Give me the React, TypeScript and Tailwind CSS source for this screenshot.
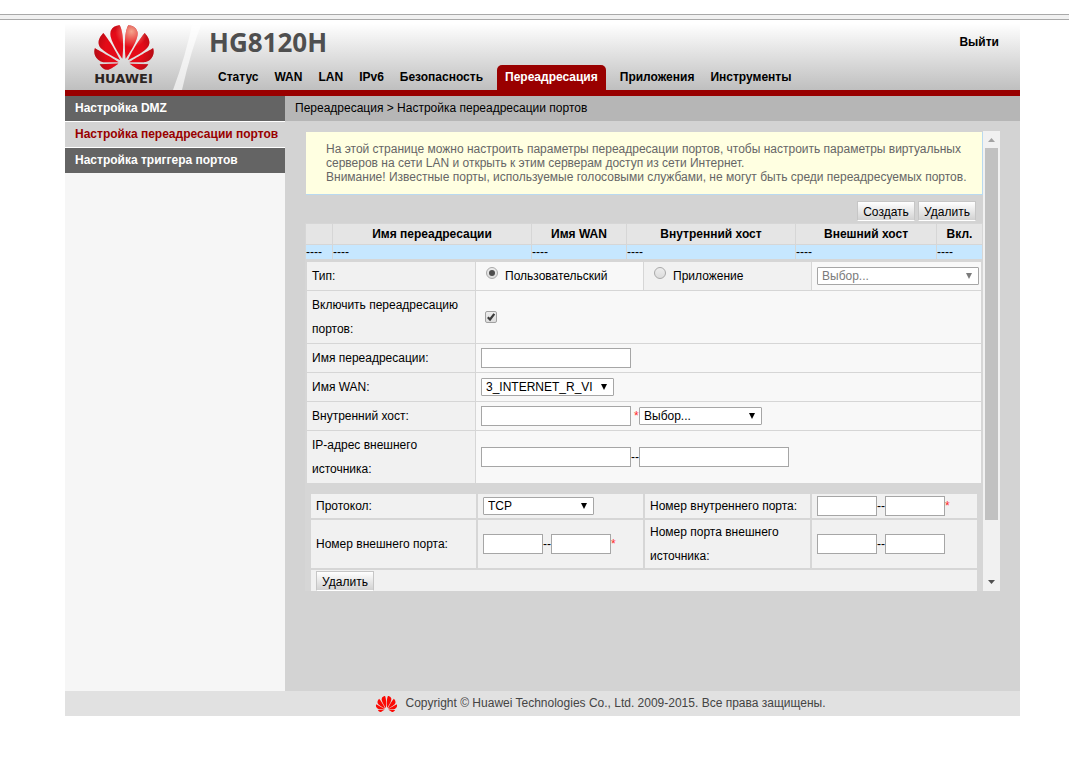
import { useId, useState } from "react";
import type { ReactNode } from "react";

const PETALS =
  "M3.67 6.14S1.82 7.91 1.72 9.78v.35c.08 1.51 1.22 2.4 1.22 2.4 1.83 1.79 6.26 4.04 7.3 4.55 0 0 .06.03.1-.01l.02-.04v-.04C7.52 10.8 3.67 6.14 3.67 6.14zM9.65 18.6c-.02-.08-.1-.08-.1-.08l-7.38.26c.8 1.43 2.15 2.53 3.56 2.2.96-.25 3.16-1.78 3.88-2.3.06-.05.04-.09.04-.09zm.08-.78C6.49 15.63.21 12.28.21 12.28c-.15.46-.2.9-.21 1.3v.07c0 1.07.4 1.82.4 1.82.8 1.69 2.34 2.2 2.34 2.2.7.3 1.4.31 1.4.31.12.02 4.4 0 5.54 0 .05 0 .08-.05.08-.05v-.06c0-.03-.03-.05-.03-.05zM9.06 3.19a3.42 3.42 0 0 0-2.57 3.15v.41c.03.6.16 1.05.16 1.05.66 2.9 3.86 7.65 4.55 8.65.05.05.1.03.1.03a.1.1 0 0 0 .06-.1c1.06-10.6-1.11-13.42-1.11-13.42-.32.02-1.19.23-1.19.23zm8.299 2.27s-.49-1.8-2.44-2.28c0 0-.57-.14-1.17-.22 0 0-2.18 2.81-1.12 13.43.01.07.06.08.06.08.07.03.1-.03.1-.03.72-1.03 3.9-5.76 4.55-8.64 0 0 .36-1.4.02-2.34zm-2.92 13.07s-.07 0-.09.05c0 0-.01.07.03.1.7.51 2.85 2 3.88 2.3 0 0 .16.05.43.06h.14c.69-.02 1.9-.37 3-2.26l-7.4-.25zm7.83-8.41c.14-2.06-1.94-3.97-1.94-3.98 0 0-3.85 4.66-6.67 10.8 0 0-.03.08.02.13l.04.01h.06c1.06-.53 5.46-2.77 7.28-4.54 0 0 1.15-.93 1.21-2.42zm1.52 2.14s-6.28 3.37-9.52 5.55c0 0-.05.04-.03.11 0 0 .03.06.07.06 1.16 0 5.56 0 5.67-.02 0 0 .57-.02 1.27-.29 0 0 1.56-.5 2.37-2.27 0 0 .73-1.45.17-3.14z";

function Petals({ shaded = false, className }: { shaded?: boolean; className: string }) {
  const id = useId();
  return (
    <svg viewBox="0 2.9 24 18.2" className={className} aria-hidden="true">
      <defs>
        <radialGradient id={`${id}-light`} gradientUnits="userSpaceOnUse" cx="15" cy="5.5" r="6.5">
          <stop offset="0" stopColor="#f4a58e" />
          <stop offset="1" stopColor="#f4a58e" stopOpacity="0" />
        </radialGradient>
        <radialGradient id={`${id}-dark`} gradientUnits="userSpaceOnUse" cx="12" cy="13" r="14">
          <stop offset="0.55" stopColor="#8e0d12" stopOpacity="0" />
          <stop offset="1" stopColor="#8e0d12" stopOpacity="0.8" />
        </radialGradient>
      </defs>
      <path d={PETALS} fill={shaded ? "#e40a18" : "#fb0a05"} />
      {shaded && <path d={PETALS} fill={`url(#${id}-dark)`} />}
      {shaded && <path d={PETALS} fill={`url(#${id}-light)`} />}
    </svg>
  );
}

const NAV = ["Статус", "WAN", "LAN", "IPv6", "Безопасность", "Переадресация", "Приложения", "Инструменты"];
const MENU = ["Настройка DMZ", "Настройка переадресации портов", "Настройка триггера портов"];
const COLUMNS = ["", "Имя переадресации", "Имя WAN", "Внутренний хост", "Внешний хост", "Вкл."];

function Header() {
  return (
    <header className="flex h-[76px] border-b-[6px] border-[#990000] bg-linear-to-b from-white from-5% to-[#bfbfbf]">
      <div className="flex w-[108px] flex-col items-center pt-[5px] pl-[9px]">
        <Petals shaded className="h-[45px] w-[60px] shrink-0" />
        <span className="mt-[2px] font-['DejaVu_Sans',sans-serif] text-[13px] leading-[14px] font-bold text-[#2b2422]">
          HUAWEI
        </span>
      </div>
      <svg viewBox="0 0 30 70" className="h-[70px] w-[30px] shrink-0" aria-hidden="true">
        <path d="M20 0H30Q18 30 9 70H0Q13 35 20 0Z" fill="#fff" fillOpacity="0.65" />
      </svg>
      <div className="flex grow flex-col">
        <div className="flex h-[45px] items-start justify-between pt-[5px] pr-[21px] pl-[6px]">
          <h1 className="font-['Noto_Sans',sans-serif] text-[26px] leading-[34px] font-bold text-[#4f4f4f]">
            HG8120H
          </h1>
          <a href="#logout" className="leading-[34px] font-bold">
            Выйти
          </a>
        </div>
        <nav className="flex h-[25px] pl-[7px] font-bold">
          {NAV.map((item) =>
            item === "Переадресация" ? (
              <a
                key={item}
                href="#forward"
                aria-current="page"
                className="mx-[6px] rounded-t-[5px] bg-[#990000] px-2 leading-[24px] text-white"
              >
                {item}
              </a>
            ) : (
              <a key={item} href={`#${item}`} className="px-2 leading-[24px]">
                {item}
              </a>
            ),
          )}
        </nav>
      </div>
    </header>
  );
}

function Sidebar() {
  return (
    <aside className="w-[220px] shrink-0 bg-[#f6f6f6]">
      <ul className="flex flex-col gap-px bg-white font-bold">
        {MENU.map((item, i) => (
          <li key={item}>
            <a
              href={`#menu-${i}`}
              className={
                i === 1
                  ? "block h-[25px] bg-[#d3d3d3] pl-[10px] leading-[24px] whitespace-nowrap text-[#990000]"
                  : "block h-[25px] bg-[#646464] pl-[10px] leading-[24px] whitespace-nowrap text-white"
              }
            >
              {item}
            </a>
          </li>
        ))}
      </ul>
    </aside>
  );
}

function PushButton({ children }: { children: ReactNode }) {
  return (
    <button
      type="button"
      className="h-5 w-[58px] border border-[#c6c6c6] border-b-white bg-linear-to-b from-white to-[#d2d2d2] pt-[2px] text-center leading-4"
    >
      {children}
    </button>
  );
}

function Picker({ label, options, width, disabled }: { label: string; options: string[]; width: string; disabled?: boolean }) {
  return (
    <span className={`relative inline-block h-[18px] align-middle leading-none ${width}`}>
      <select
        aria-label={label}
        disabled={disabled}
        className="h-[18px] w-full appearance-none rounded-[1px] border border-[#a6a6a6] bg-white pr-4 pl-1 leading-4 text-black disabled:text-[#7b7b7b]"
      >
        {options.map((option) => (
          <option key={option}>{option}</option>
        ))}
      </select>
      <svg
        viewBox="0 0 6 6"
        className={`pointer-events-none absolute top-[6px] right-[7px] size-[6px] ${disabled ? "text-[#7b7b7b]" : "text-black"}`}
        aria-hidden="true"
      >
        <path d="M0 0H6L3 6Z" fill="currentColor" />
      </svg>
    </span>
  );
}

function Field({ label, id, short }: { label?: string; id?: string; short?: boolean }) {
  return (
    <input
      id={id}
      type="text"
      aria-label={label}
      className={
        short
          ? "h-5 w-[60px] border border-[#a6a6a6] bg-white px-1 align-middle"
          : "h-5 w-[150px] border border-[#a6a6a6] bg-white px-1 align-middle"
      }
    />
  );
}

function Radio({ label, checked, onChange }: { label: string; checked: boolean; onChange: () => void }) {
  return (
    <label className="flex items-center gap-[7px] pl-[5px]">
      <span className="relative mb-[6px] block size-3">
        <input
          type="radio"
          name="kind"
          checked={checked}
          onChange={onChange}
          className="block size-3 appearance-none rounded-full border border-[#a9a9a9] bg-linear-to-b from-[#ededed] to-[#dcdcdc]"
        />
        {checked && <span className="pointer-events-none absolute top-[3px] left-[3px] size-[6px] rounded-full bg-[#4d4d4d]" />}
      </span>
      {label}
    </label>
  );
}

function PortPair({ label, required }: { label: string; required?: boolean }) {
  return (
    <div className="flex items-center">
      <Field short label={`${label} с`} />
      <span>--</span>
      <Field short label={`${label} по`} />
      {required && <span className="text-[#ff2a2a]">*</span>}
    </div>
  );
}

const LABEL = "bg-[#f1f1f1] px-[5px] py-[2px] text-left font-normal";
const VALUE = "bg-[#f8f8f8] px-[5px] py-[2px]";
const PORT = "bg-[#f1f1f1] px-[5px] py-0 text-left font-normal";

function ForwardingList() {
  return (
    <table className="w-full table-fixed border-separate border-spacing-px bg-[#d6d6d6]">
      <colgroup>
        <col className="w-[26px]" />
        <col />
        <col className="w-[94px]" />
        <col className="w-[168px]" />
        <col className="w-[140px]" />
        <col className="w-[45px]" />
      </colgroup>
      <thead>
        <tr className="h-5 bg-[#e5e5e5]">
          {COLUMNS.map((column) => (
            <th key={column} className="p-0">
              {column}
            </th>
          ))}
        </tr>
      </thead>
      <tbody>
        <tr className="h-[14px] bg-[#c6e7ff] leading-[14px]">
          {COLUMNS.map((column) => (
            <td key={column} className="p-0">
              ----
            </td>
          ))}
        </tr>
      </tbody>
    </table>
  );
}

function SettingsForm() {
  const [kind, setKind] = useState("custom");
  return (
    <form className="bg-[#d6d6d6] px-px pt-px leading-6">
      <table className="w-full table-fixed border-separate border-spacing-px">
        <colgroup>
          <col className="w-[168px]" />
          <col className="w-[167px]" />
          <col className="w-[167px]" />
          <col />
        </colgroup>
        <tbody>
          <tr>
            <th className={LABEL}>Тип:</th>
            <td className={VALUE}>
              <Radio label="Пользовательский" checked={kind === "custom"} onChange={() => setKind("custom")} />
            </td>
            <td className={LABEL}>
              <Radio label="Приложение" checked={kind === "app"} onChange={() => setKind("app")} />
            </td>
            <td className="bg-[#f8f8f8] px-[5px] py-0 leading-none">
              <Picker label="Приложение" options={["Выбор..."]} width="w-[162px]" disabled={kind === "custom"} />
            </td>
          </tr>
          <tr>
            <th className={LABEL}>
              <label htmlFor="enable">
                Включить переадресацию
                <br />
                портов:
              </label>
            </th>
            <td className={VALUE} colSpan={3}>
              <span className="relative ml-1 block size-3">
                <input
                  id="enable"
                  type="checkbox"
                  defaultChecked
                  className="peer block size-3 appearance-none rounded-[2px] border border-[#a2a2a2] bg-linear-to-b from-[#eeeeee] to-[#dddddd]"
                />
                <svg
                  viewBox="0 0 12 12"
                  className="pointer-events-none absolute inset-0 hidden size-3 peer-checked:block"
                  aria-hidden="true"
                >
                  <path d="M2.8 6.3 5 8.5 9.3 2.8" fill="none" stroke="#3c3c3c" strokeWidth="2.2" />
                </svg>
              </span>
            </td>
          </tr>
          <tr>
            <th className={LABEL}>
              <label htmlFor="name">Имя переадресации:</label>
            </th>
            <td className={VALUE} colSpan={3}>
              <div className="flex h-6 items-center">
                <Field id="name" />
              </div>
            </td>
          </tr>
          <tr>
            <th className={LABEL}>Имя WAN:</th>
            <td className={VALUE} colSpan={3}>
              <div className="flex h-6 items-center">
                <Picker label="Имя WAN" options={["3_INTERNET_R_VI"]} width="w-[133px]" />
              </div>
            </td>
          </tr>
          <tr>
            <th className={LABEL}>
              <label htmlFor="host">Внутренний хост:</label>
            </th>
            <td className={VALUE} colSpan={3}>
              <div className="flex h-6 items-center">
                <Field id="host" />
                <span className="w-2 pl-[3px] text-[#ff2a2a]">*</span>
                <Picker label="Выбор хоста" options={["Выбор..."]} width="w-[123px]" />
              </div>
            </td>
          </tr>
          <tr>
            <th className={LABEL}>
              IP-адрес внешнего
              <br />
              источника:
            </th>
            <td className={VALUE} colSpan={3}>
              <div className="flex items-center">
                <Field label="Начальный IP-адрес" />
                <span>--</span>
                <Field label="Конечный IP-адрес" />
              </div>
            </td>
          </tr>
        </tbody>
      </table>
      <div className="px-[3px] pt-2">
        <table className="w-full table-fixed border-separate border-spacing-[2px]">
          <colgroup>
            <col className="w-[165px]" />
            <col className="w-[165px]" />
            <col className="w-[165px]" />
            <col />
          </colgroup>
          <tbody>
            <tr>
              <th className={PORT}>Протокол:</th>
              <td className={PORT}>
                <div className="flex h-6 items-center">
                  <Picker label="Протокол" options={["TCP", "UDP", "TCP/UDP"]} width="w-[111px]" />
                </div>
              </td>
              <th className={PORT}>Номер внутреннего порта:</th>
              <td className={PORT}>
                <PortPair label="Номер внутреннего порта" required />
              </td>
            </tr>
            <tr>
              <th className={PORT}>Номер внешнего порта:</th>
              <td className={PORT}>
                <PortPair label="Номер внешнего порта" required />
              </td>
              <th className={PORT}>
                Номер порта внешнего
                <br />
                источника:
              </th>
              <td className={PORT}>
                <PortPair label="Номер порта внешнего источника" />
              </td>
            </tr>
            <tr>
              <td className={PORT} colSpan={4}>
                <div className="flex h-6 items-start pt-px">
                  <PushButton>Удалить</PushButton>
                </div>
              </td>
            </tr>
          </tbody>
        </table>
      </div>
    </form>
  );
}

function ScrollTrack() {
  return (
    <div className="flex w-[17px] shrink-0 flex-col items-center bg-[#f1f1f1]" aria-hidden="true">
      <svg viewBox="0 0 17 17" className="size-[17px] shrink-0">
        <path d="M5 11H12L8.5 7Z" fill="#a3a3a3" />
      </svg>
      <div className="h-[372px] w-[13px] bg-[#c1c1c1]" />
      <div className="grow" />
      <svg viewBox="0 0 17 17" className="size-[17px] shrink-0">
        <path d="M5 6H12L8.5 10Z" fill="#505050" />
      </svg>
    </div>
  );
}

export default function App() {
  return (
    <div className="min-h-screen bg-white pt-[14px] font-['Liberation_Sans',Arial,sans-serif] text-[12px] leading-[14px] text-black">
      <div className="h-[6px] border-y border-[#a9a9a9] bg-[#f1f1f1]" />
      <div className="mr-[49px] ml-[65px]">
        <Header />
        <div className="flex">
          <Sidebar />
          <main className="min-w-0 grow bg-[#d3d3d3]">
            <p className="h-[25px] bg-[#b6b6b6] pl-[10px] leading-[24px]">Переадресация &gt; Настройка переадресации портов</p>
            <div className="mt-[10px] mr-5 mb-[100px] ml-5 flex h-[460px]">
              <div className="min-w-0 grow overflow-hidden">
                <div className="mt-px ml-px border-r border-b border-[#b9d9f0] bg-[#ffffe1] py-[10px] pl-5 whitespace-nowrap text-[#666666]">
                  На этой странице можно настроить параметры переадресации портов, чтобы настроить параметры виртуальных
                  <br />
                  серверов на сети LAN и открыть к этим серверам доступ из сети Интернет.
                  <br />
                  Внимание! Известные порты, используемые голосовыми службами, не могут быть среди переадресуемых портов.
                </div>
                <div className="flex justify-end gap-[3px] pt-[6px] pr-[7px] pb-[2px]">
                  <PushButton>Создать</PushButton>
                  <PushButton>Удалить</PushButton>
                </div>
                <ForwardingList />
                <SettingsForm />
              </div>
              <ScrollTrack />
            </div>
          </main>
        </div>
        <footer className="flex h-[25px] items-center justify-center gap-2 bg-[#e1e1e1] pl-[115px] text-[#444444]">
          <Petals className="h-4 w-[23px]" />
          <span className="pb-[2px] leading-4">
            Copyright © Huawei Technologies Co., Ltd. 2009-2015. Все права защищены.
          </span>
        </footer>
      </div>
    </div>
  );
}
